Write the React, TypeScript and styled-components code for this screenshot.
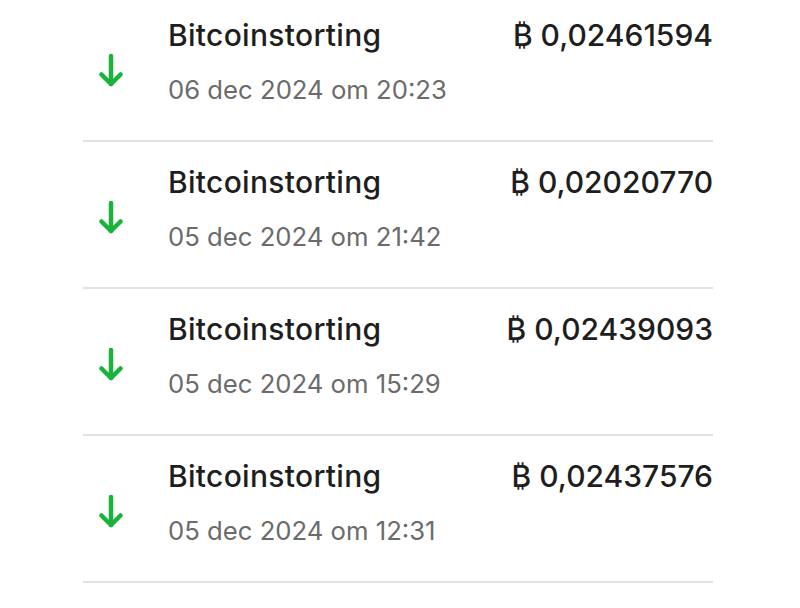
import styled, { createGlobalStyle } from "styled-components";

const GlobalStyle = createGlobalStyle`
    body {
        margin: 0;
        background: #ffffff;
        font-family: Inter, "Liberation Sans", sans-serif;
    }
`;

const List = styled.ul`
    list-style: none;
    margin: -5px 0 0 83px;
    padding: 0;
    width: 630px;
`;

const Row = styled.li`
    box-sizing: border-box;
    height: 147px;
    display: flex;
    padding-top: 22px;
    border-bottom: 2px solid #e2e2e2;
`;

const Icon = styled.div`
    width: 85px;
    flex-shrink: 0;
    padding: 36px 0 0 15px;
    box-sizing: border-box;
`;

const Body = styled.div`
    flex: 1;
    display: flex;
    flex-direction: column;
    gap: 21px;
`;

const Top = styled.div`
    display: flex;
    justify-content: space-between;
    font-size: 30px;
    font-weight: 500;
    color: #1e1e1e;
    line-height: 36px;
`;

const Title = styled.span`
    letter-spacing: 0.3px;
`;

const Date = styled.div`
    font-size: 25.7px;
    color: #6b6b6b;
    line-height: 32px;
`;

const DownArrow = () => (
    <svg width="26" height="34" viewBox="0 0 26 34" fill="none" stroke="#19b23b" strokeWidth="4.5" strokeLinecap="round" strokeLinejoin="round">
        <path d="M13 3 V31" />
        <path d="M3.5 21.5 L13 31 L22.5 21.5" />
    </svg>
);

interface ITransaction {
    date: string;
    amount: string;
}

const transactions: ITransaction[] = [
    { date: "06 dec 2024 om 20:23", amount: "0,02461594" },
    { date: "05 dec 2024 om 21:42", amount: "0,02020770" },
    { date: "05 dec 2024 om 15:29", amount: "0,02439093" },
    { date: "05 dec 2024 om 12:31", amount: "0,02437576" },
];

const App = () => {
    return (
        <>
            <GlobalStyle />
            <List>
                {transactions.map((t) => (
                    <Row key={t.date}>
                        <Icon><DownArrow /></Icon>
                        <Body>
                            <Top>
                                <Title>Bitcoinstorting</Title>
                                <span>₿ {t.amount}</span>
                            </Top>
                            <Date>{t.date}</Date>
                        </Body>
                    </Row>
                ))}
            </List>
        </>
    );
}

export default App;
